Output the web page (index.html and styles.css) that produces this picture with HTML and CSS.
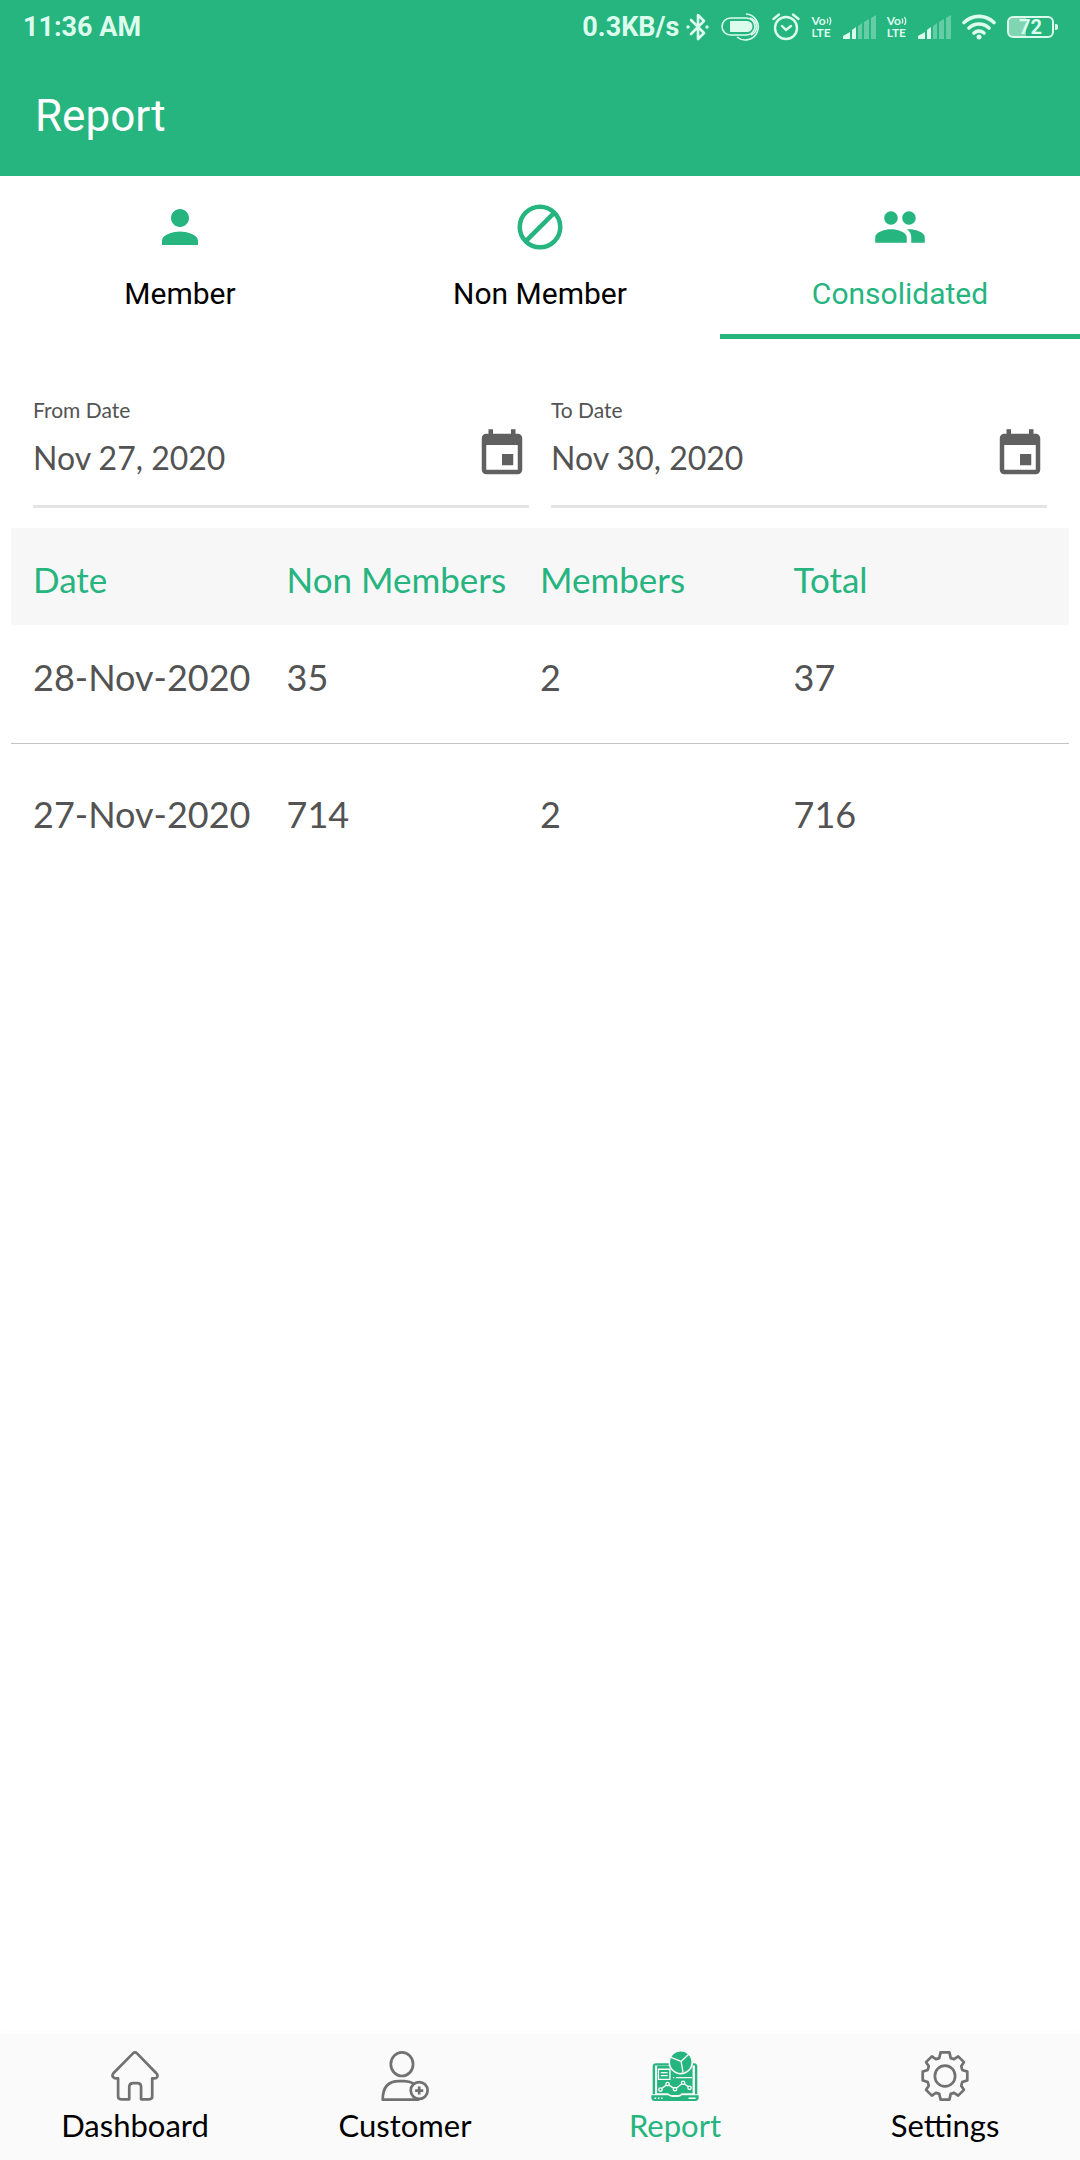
FILE: index.html
```
<!DOCTYPE html>
<html lang="en">
<head>
    <meta charset="UTF-8">
    <meta name="viewport" content="width=device-width, initial-scale=1.0">
    <title>Report</title>
    <link rel="stylesheet" href="styles.css">
</head>
<body>
    <!-- Shared icons -->
    <svg class="sprite" aria-hidden="true">
        <symbol id="signal" viewBox="0 0 33 24">
            <path d="M0 24v-3l7-4v7z"/>
            <path d="M9 24V15l4-3v12z"/>
            <path opacity="0.35" d="M15 24V11l4-3v16zM21 24V7l5-3v20zM28 24V3l5-3v24z"/>
        </symbol>
        <symbol id="waves" viewBox="0 0 6 10">
            <path fill="none" stroke="currentColor" stroke-width="1.3" d="M1 2.500q1.500 2.500 0 5M3.500 1q2.500 4 0 8"/>
        </symbol>
        <symbol id="event" viewBox="0 0 24 24">
            <path d="M17 12h-5v5h5v-5zM16 1v2H8V1H6v2H5c-1.11 0-1.99.9-1.99 2L3 19c0 1.1.89 2 2 2h14c1.1 0 2-.9 2-2V5c0-1.1-.9-2-2-2h-1V1h-2zm3 18H5V8h14v11z"/>
        </symbol>
    </svg>

    <header class="header">
        <div class="status-bar">
            <span>11:36 AM</span>
            <div class="status-icons">
                <span>0.3KB/s</span>
                <svg class="bluetooth" width="24" height="28" viewBox="0 0 24 28" fill="none" stroke="currentColor" stroke-width="2.6" stroke-linejoin="round" stroke-linecap="round">
                    <path d="M5 7l13 13-6 6V2l6 6L5 21"/>
                    <circle cx="2" cy="14" r="1" fill="currentColor" stroke-width="1.4"/>
                    <circle cx="21" cy="14" r="1" fill="currentColor" stroke-width="1.4"/>
                </svg>
                <svg width="40" height="28" viewBox="0 0 40 28" fill="none" stroke="currentColor" stroke-width="1.6">
                    <rect x="1" y="5" width="33" height="17" rx="8.5"/>
                    <path fill="currentColor" stroke="none" d="M9 8h17a5.500 5.500 0 0 1 0 11H9z"/>
                    <path d="M25 1a13 13 0 1 1-9 23"/>
                    <path d="M29 5a9 9 0 0 1 1 17"/>
                </svg>
                <svg width="28" height="28" viewBox="0 0 28 28" fill="none" stroke="currentColor" stroke-width="2.400" stroke-linecap="round">
                    <circle cx="14" cy="15" r="11"/>
                    <path d="M10 13l4 4 5-4M1.500 6L7 1.500M26.500 6L21 1.500"/>
                </svg>
                <div class="volte">
                    <div>Vo<svg><use href="#waves"/></svg></div>
                    <div>LTE</div>
                </div>
                <svg width="33" height="24"><use href="#signal"/></svg>
                <div class="volte">
                    <div>Vo<svg><use href="#waves"/></svg></div>
                    <div>LTE</div>
                </div>
                <svg width="33" height="24"><use href="#signal"/></svg>
                <svg width="34" height="26" viewBox="0 0 34 26" fill="none" stroke="currentColor" stroke-width="3.600" stroke-linecap="round">
                    <path d="M2 8.500a21.500 21.500 0 0 1 30 0M7 14a14.500 14.500 0 0 1 20 0M12 19a7.500 7.500 0 0 1 10 0"/>
                    <circle cx="17" cy="23" r="2.500" fill="currentColor" stroke="none"/>
                </svg>
                <span class="battery">72</span>
            </div>
        </div>
        <h1>Report</h1>
    </header>

    <div class="tabs" role="tablist">
        <button class="tab" role="tab" aria-selected="false">
            <svg viewBox="0 0 24 24"><path d="M12 12c2.210 0 4-1.790 4-4s-1.790-4-4-4-4 1.790-4 4 1.790 4 4 4zm0 2c-2.670 0-8 1.340-8 4v2h16v-2c0-2.660-5.330-4-8-4z"/></svg>
            <span>Member</span>
        </button>
        <button class="tab" role="tab" aria-selected="false">
            <svg viewBox="0 0 24 24" class="outline"><circle cx="12" cy="12" r="9"/><path d="M5.700 18.300L18.300 5.700"/></svg>
            <span>Non Member</span>
        </button>
        <button class="tab active" role="tab" aria-selected="true">
            <svg viewBox="0 0 24 24"><path d="M16 11c1.660 0 2.990-1.340 2.990-3S17.660 5 16 5c-1.660 0-3 1.340-3 3s1.340 3 3 3zm-8 0c1.660 0 2.990-1.340 2.990-3S9.660 5 8 5C6.340 5 5 6.340 5 8s1.340 3 3 3zm0 2c-2.330 0-7 1.170-7 3.500V19h14v-2.500c0-2.330-4.670-3.500-7-3.500zm8 0c-.29 0-.62.02-.97.05 1.160.84 1.970 1.970 1.970 3.450V19h6v-2.500c0-2.330-4.670-3.500-7-3.500z"/></svg>
            <span>Consolidated</span>
        </button>
    </div>

    <main>
        <form class="dates">
            <div class="date-field">
                <div class="date-text">
                    <label for="fromDate">From Date</label>
                    <input type="text" id="fromDate" value="Nov 27, 2020" readonly>
                </div>
                <button type="button" aria-label="Pick from date"><svg><use href="#event"/></svg></button>
            </div>
            <div class="date-field">
                <div class="date-text">
                    <label for="toDate">To Date</label>
                    <input type="text" id="toDate" value="Nov 30, 2020" readonly>
                </div>
                <button type="button" aria-label="Pick to date"><svg><use href="#event"/></svg></button>
            </div>
        </form>

        <table class="report">
            <thead>
                <tr>
                    <th>Date</th>
                    <th>Non Members</th>
                    <th>Members</th>
                    <th>Total</th>
                </tr>
            </thead>
            <tbody>
                <tr>
                    <td>28-Nov-2020</td>
                    <td>35</td>
                    <td>2</td>
                    <td>37</td>
                </tr>
                <tr>
                    <td>27-Nov-2020</td>
                    <td>714</td>
                    <td>2</td>
                    <td>716</td>
                </tr>
            </tbody>
        </table>
    </main>

    <nav class="bottom-nav">
        <a href="#dashboard">
            <svg viewBox="0 0 140 148">
                <path d="M64 7L6 66Q2 71 4 76Q8 81 14 81H20V134Q20 143 29 143H53V107Q53 95 65 95H77Q88 95 88 107V143H112Q121 143 121 134V81H127Q134 81 136 76Q138 70 133 66L76 7Q70 1 64 7Z"/>
            </svg>
            <span>Dashboard</span>
        </a>
        <a href="#customer">
            <svg viewBox="0 0 140 148">
                <ellipse cx="61" cy="39" rx="33" ry="35"/>
                <path d="M112 144H4Q4 89 52 89H68Q82 89 95 96"/>
                <circle cx="112" cy="117" r="25"/>
                <path d="M112 105V129M100 117H124"/>
            </svg>
            <span>Customer</span>
        </a>
        <a href="#report" class="active">
            <svg viewBox="0 0 140 148">
                <g class="solid">
                    <path d="M4 128V46Q4 36 14 36H126Q136 36 136 46V128H129V43H11V128Z"/>
                    <path d="M17 44H122V125H90Q86 130 80 130H60Q54 130 50 125H17Z"/>
                    <path d="M0 131H50Q56 136 62 136H80Q86 136 90 131H140V138Q140 148 130 148H10Q0 148 0 138Z"/>
                </g>
                <g class="knockout">
                    <rect x="21" y="54" width="34" height="30"/>
                    <path d="M28 64H48M28 73H48M64 79H68M73 79H120M9 140H14M19 140H24M29 140H33M110 140H131"/>
                    <path d="M27 114L48 98L70 113L94 94L113 109"/>
                </g>
                <g class="node">
                    <circle cx="27" cy="114" r="5"/>
                    <circle cx="48" cy="98" r="5"/>
                    <circle cx="70" cy="113" r="5"/>
                    <circle cx="94" cy="94" r="5"/>
                    <circle cx="113" cy="109" r="5"/>
                </g>
                <circle class="pie" cx="87" cy="33" r="34"/>
                <path class="knockout" d="M88 31L56 18M88 31L112 8M88 31L94 64"/>
            </svg>
            <span>Report</span>
        </a>
        <a href="#settings">
            <svg viewBox="0 0 140 148">
                <path d="M57 4H83L87 21L97 24L109 16L126 33L118 45L121 56L136 61V87L121 92L118 103L126 115L109 132L97 124L87 127L83 144H57L53 127L43 124L31 132L14 115L22 103L19 92L4 87V61L19 56L22 45L14 33L31 16L43 24L53 21Z"/>
                <ellipse cx="70" cy="74" rx="30" ry="31"/>
            </svg>
            <span>Settings</span>
        </a>
    </nav>
</body>
</html>
```
FILE: styles.css
```
* {
    box-sizing: border-box;
}
body {
    margin: 0;
    min-height: 100vh;
    display: flex;
    flex-direction: column;
    background-color: #fff;
    color: #535353;
    font-family: Lato, "Open Sans", sans-serif;
}
button {
    border: none;
    background: none;
    padding: 0;
    cursor: pointer;
}
svg {
    display: block;
    fill: currentColor;
}
.sprite {
    position: absolute;
    width: 0;
    height: 0;
}

/* Header */
.header {
    background-color: #26b47f;
    color: #fff;
    padding-bottom: 34px;
    font-family: Roboto, sans-serif;
}
.status-bar {
    display: flex;
    justify-content: space-between;
    align-items: center;
    height: 54px;
    padding: 0 20px 0 23px;
    color: #dcfdee;
    font-size: 27px;
    font-weight: 700;
}
.status-icons {
    display: flex;
    align-items: center;
    gap: 11px;
}
.status-icons svg[fill="none"] {
    fill: none;
}
.status-icons .bluetooth {
    margin-left: -4px;
}
.volte {
    font-family: Lato, sans-serif;
    font-size: 12px;
    line-height: 12px;
    font-weight: 700;
}
.volte div {
    display: flex;
    align-items: center;
}
.volte svg {
    width: 6px;
    height: 10px;
}
.battery {
    position: relative;
    width: 47px;
    height: 22px;
    margin-right: 6px;
    border: 2px solid currentColor;
    border-radius: 6px;
    background: linear-gradient(to right, #80d6b3 40%, transparent 40%);
    font-size: 20px;
    line-height: 18px;
    text-align: center;
}
.battery::after {
    content: "";
    position: absolute;
    right: -6px;
    top: 6px;
    width: 3px;
    height: 6px;
    border-radius: 0 2px 2px 0;
    background-color: currentColor;
}
h1 {
    margin: 0;
    padding: 36px 35px 0;
    font-size: 44px;
    line-height: 52px;
    font-weight: 400;
}

/* Tabs */
.tabs {
    display: grid;
    grid-template-columns: repeat(3, 1fr);
}
.tab {
    display: flex;
    flex-direction: column;
    align-items: center;
    gap: 20px;
    padding: 24px 0 20px;
    border-bottom: 5px solid transparent;
    color: #000;
    font-family: Roboto, sans-serif;
    font-size: 30px;
    line-height: 40px;
}
.tab svg {
    width: 54px;
    height: 54px;
    color: #26b47f;
}
.tab .outline {
    fill: none;
    stroke: currentColor;
    stroke-width: 2;
}
.tab.active {
    color: #26b47f;
    border-bottom-color: #26b47f;
}

/* Date range */
main {
    flex: 1;
    padding: 0 11px;
}
.dates {
    display: grid;
    grid-template-columns: 1fr 1fr;
    gap: 22px;
    padding: 56px 22px 20px;
}
.date-field {
    display: flex;
    align-items: flex-start;
    padding-bottom: 26px;
    border-bottom: 3px solid #e4e4e4;
}
.date-text {
    flex: 1;
    min-width: 0;
}
.date-text label {
    display: block;
    font-size: 21px;
    line-height: 30px;
}
.date-text input {
    display: block;
    width: 100%;
    height: 44px;
    margin-top: 10px;
    padding: 0;
    border: none;
    outline: none;
    background: none;
    color: inherit;
    font-family: inherit;
    font-size: 32px;
}
.date-field button {
    margin-top: 32px;
}
.date-field svg {
    width: 54px;
    height: 54px;
    margin-bottom: -2px;
    color: #606060;
}

/* Report table */
.report {
    display: block;
    font-size: 36px;
    line-height: 48px;
}
.report thead,
.report tbody {
    display: block;
}
.report tr {
    display: grid;
    grid-template-columns: repeat(4, 1fr);
    padding: 46px 22px 42px;
}
.report th,
.report td {
    padding: 0;
    text-align: left;
    white-space: nowrap;
}
.report thead tr {
    padding: 27px 22px 22px;
    background-color: #f7f7f7;
    color: #26b47f;
    font-size: 35px;
}
.report th {
    font-weight: 400;
}
.report tbody tr:first-child {
    padding-top: 28px;
    border-bottom: 1px solid #c4c4c4;
}

/* Bottom navigation */
.bottom-nav {
    display: grid;
    grid-template-columns: repeat(4, 1fr);
    padding: 17px 0 15px;
    background-color: #fafafa;
    box-shadow: 0 0 8px rgba(0, 0, 0, 0.03);
}
.bottom-nav a {
    display: flex;
    flex-direction: column;
    align-items: center;
    gap: 4px;
    color: #000;
    font-size: 31px;
    line-height: 40px;
    text-decoration: none;
}
.bottom-nav svg {
    width: 48px;
    height: 50px;
    fill: none;
    stroke: #717171;
    stroke-width: 8;
    stroke-linejoin: round;
}
.bottom-nav .active {
    color: #26b47f;
}
.bottom-nav .solid {
    fill: #26b47f;
    stroke: none;
}
.bottom-nav .knockout {
    fill: none;
    stroke: #fafafa;
    stroke-width: 4;
}
.bottom-nav .node {
    fill: #26b47f;
    stroke: #fafafa;
    stroke-width: 4;
}
.bottom-nav .pie {
    fill: #26b47f;
    stroke: #fafafa;
    stroke-width: 5;
}
```
